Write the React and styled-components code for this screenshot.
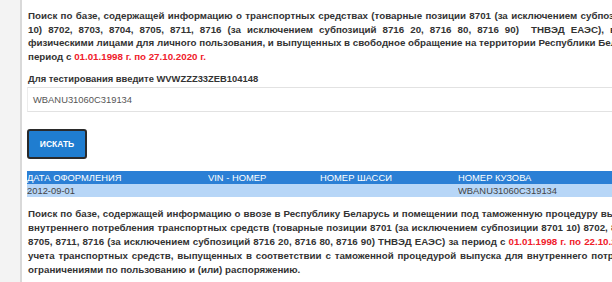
import React from 'react';
import styled, { createGlobalStyle } from 'styled-components';

const GlobalStyle = createGlobalStyle`
  html, body {
    margin: 0;
    padding: 0;
    overflow: hidden;
    background: #fff;
  }
  body {
    font-family: "Liberation Sans", Arial, sans-serif;
    color: #333;
  }
`;

const Page = styled.div`
  display: flex;
  align-items: stretch;
  height: 282px;
  width: 760px;
`;

const Sidebar = styled.div`
  width: 20px;
  flex-shrink: 0;
  background: #f3f3f3;
  border-right: 2px solid #d9d9d9;
`;

const Main = styled.div`
  width: 636px;
  flex-shrink: 0;
  padding: 9px 0 0 5px;
`;

const Info = styled.p`
  margin: 0 0 0 1px;
  font-size: 9.75px;
  line-height: 13.6px;
  font-weight: bold;
  text-align: justify;
  color: #333;
`;

const Red = styled.span`
  color: #f0202a;
`;

const Label = styled.div`
  margin: 9px 0 0 1px;
  font-size: 9.4px;
  font-weight: bold;
  line-height: 13px;
`;

const Field = styled.div`
  margin-top: 2px;
  width: 700px;
  height: 23px;
  border-top: 1px solid #e2e2e2;
  border-bottom: 1px solid #e2e2e2;
  border-left: 1px solid #ececec;
  display: flex;
  align-items: center;
  padding-left: 5px;
  font-size: 9.4px;
  color: #555;
`;

const Button = styled.button`
  margin-top: 17px;
  width: 60px;
  height: 30px;
  background: #1f7dd0;
  border: 2px solid #2a2a2a;
  border-radius: 3px;
  color: #fff;
  font-family: "Liberation Sans", Arial, sans-serif;
  font-size: 8.5px;
  font-weight: bold;
  padding: 0;
  display: block;
`;

const Table = styled.div`
  margin-top: 12px;
  width: 700px;
  font-size: 9.4px;
`;

const Row = styled.div`
  display: grid;
  grid-template-columns: 181px 112px 138px 1fr;
  height: 13px;
  line-height: 13px;
  background: ${p => (p.$head ? '#2b7fd5' : '#b7d6f7')};
  color: ${p => (p.$head ? '#fff' : '#444')};
  text-transform: ${p => (p.$head ? 'uppercase' : 'none')};
`;

const Cell = styled.div`
  white-space: nowrap;
  overflow: hidden;
`;

const Bottom = styled(Info)`
  margin-top: 10px;
  line-height: 14px;
`;

export default function App() {
  return (
    <>
      <GlobalStyle />
      <Page>
        <Sidebar />
        <Main>
          <Info>
            Поиск по базе, содержащей информацию о транспортных средствах (товарные позиции 8701 (за исключением субпозиций 8701
            10) 8702, 8703, 8704, 8705, 8711, 8716 (за исключением субпозиций 8716 20, 8716 80, 8716 90)&nbsp; ТНВЭД ЕАЭС), ввезенных
            физическими лицами для личного пользования, и выпущенных в свободное обращение на территории Республики Беларусь
            <br />
            период с <Red>01.01.1998 г. по 27.10.2020 г.</Red>
          </Info>
          <Label>Для тестирования введите WVWZZZ33ZEB104148</Label>
          <Field>WBANU31060C319134</Field>
          <Button>ИСКАТЬ</Button>
          <Table>
            <Row $head>
              <Cell>Дата оформления</Cell>
              <Cell>VIN - номер</Cell>
              <Cell>Номер шасси</Cell>
              <Cell>Номер кузова</Cell>
            </Row>
            <Row>
              <Cell>2012-09-01</Cell>
              <Cell></Cell>
              <Cell></Cell>
              <Cell>WBANU31060C319134</Cell>
            </Row>
          </Table>
          <Bottom>
            Поиск по базе, содержащей информацию о ввозе в Республику Беларусь и помещении под таможенную процедуру выпуска для
            внутреннего потребления транспортных средств (товарные позиции 8701 (за исключением субпозиции 8701 10) 8702, 8703, 8704,
            8705, 8711, 8716 (за исключением субпозиций 8716 20, 8716 80, 8716 90) ТНВЭД ЕАЭС) за период с <Red>01.01.1998 г. по 22.10.2020 г.</Red> для
            учета транспортных средств, выпущенных в соответствии с таможенной процедурой выпуска для внутреннего потребления с
            ограничениями по пользованию и (или) распоряжению.
          </Bottom>
        </Main>
      </Page>
    </>
  );
}
